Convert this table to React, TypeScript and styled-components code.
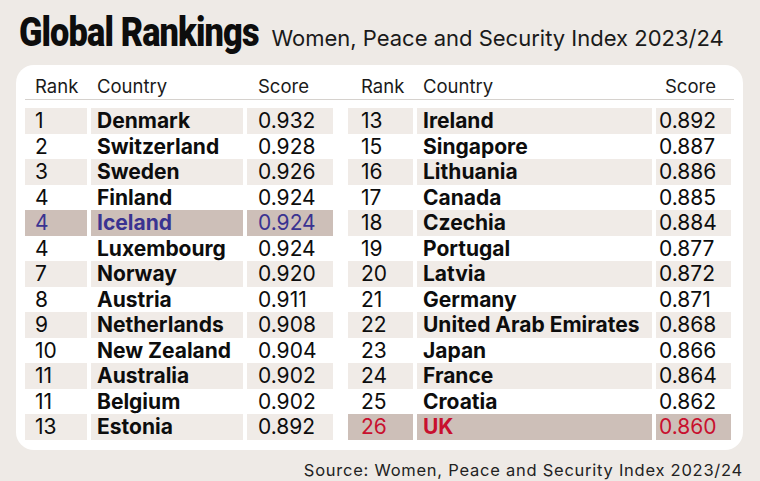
import React from "react";
import styled, { createGlobalStyle } from "styled-components";

type Entry = { rank: number; country: string; score: string };

const left: Entry[] = [
  { rank: 1, country: "Denmark", score: "0.932" },
  { rank: 2, country: "Switzerland", score: "0.928" },
  { rank: 3, country: "Sweden", score: "0.926" },
  { rank: 4, country: "Finland", score: "0.924" },
  { rank: 4, country: "Iceland", score: "0.924" },
  { rank: 4, country: "Luxembourg", score: "0.924" },
  { rank: 7, country: "Norway", score: "0.920" },
  { rank: 8, country: "Austria", score: "0.911" },
  { rank: 9, country: "Netherlands", score: "0.908" },
  { rank: 10, country: "New Zealand", score: "0.904" },
  { rank: 11, country: "Australia", score: "0.902" },
  { rank: 11, country: "Belgium", score: "0.902" },
  { rank: 13, country: "Estonia", score: "0.892" },
];

const right: Entry[] = [
  { rank: 13, country: "Ireland", score: "0.892" },
  { rank: 15, country: "Singapore", score: "0.887" },
  { rank: 16, country: "Lithuania", score: "0.886" },
  { rank: 17, country: "Canada", score: "0.885" },
  { rank: 18, country: "Czechia", score: "0.884" },
  { rank: 19, country: "Portugal", score: "0.877" },
  { rank: 20, country: "Latvia", score: "0.872" },
  { rank: 21, country: "Germany", score: "0.871" },
  { rank: 22, country: "United Arab Emirates", score: "0.868" },
  { rank: 23, country: "Japan", score: "0.866" },
  { rank: 24, country: "France", score: "0.864" },
  { rank: 25, country: "Croatia", score: "0.862" },
  { rank: 26, country: "UK", score: "0.860" },
];

type Tone = "plain" | "stripe" | "iceland" | "uk";

const GlobalStyle = createGlobalStyle`
  html, body {
    margin: 0;
    padding: 0;
    background: #eeeae6;
  }
  body {
    font-family: "Inter", "Liberation Sans", sans-serif;
    color: #111;
  }
`;

const Page = styled.div`
  width: 760px;
  height: 481px;
  box-sizing: border-box;
  padding: 10px 17px 0 16px;
  background: #eeeae6;
  overflow: hidden;
`;

const TitleRow = styled.div`
  display: flex;
  align-items: baseline;
  height: 55px;
  padding-left: 3px;
`;

const Title = styled.h1`
  margin: 0 -40px 0 0;
  font-family: "Roboto", "Liberation Sans", sans-serif;
  font-weight: 900;
  font-size: 40px;
  line-height: 45px;
  letter-spacing: -1px;
  color: #0d0d0d;
  display: inline-block;
  transform: scaleX(0.858);
  transform-origin: left center;
`;

const Subtitle = styled.span`
  font-family: "Inter", "Liberation Sans", sans-serif;
  font-size: 22px;
  color: #1a1a1a;
  margin-left: 13px;
`;

const Card = styled.div`
  width: 727px;
  height: 385px;
  box-sizing: border-box;
  background: #fff;
  border-radius: 18px;
  padding: 8px 12px 0 9px;
`;

const Grid = styled.div`
  display: grid;
  grid-template-columns: 62px 152px 86px 7px 65px 235px 75px;
  grid-template-rows: 35px;
  grid-auto-rows: 25.5px;
  column-gap: 4px;
`;

const Head = styled.div<{ $pad: number; $end?: boolean }>`
  font-size: 18.5px;
  line-height: 26px;
  height: 26px;
  padding-left: ${(p) => p.$pad}px;
  color: #1a1a1a;
  border-bottom: 1px solid #d6d2ce;
  margin-right: ${(p) => (p.$end ? -3 : -4)}px;
`;

const Cell = styled.div<{ $tone: Tone; $bold?: boolean; $pad: number }>`
  font-size: 21px;
  line-height: 25.5px;
  white-space: nowrap;
  padding-left: ${(p) => p.$pad}px;
  font-weight: ${(p) => (p.$bold ? 700 : 400)};
  background: ${(p) =>
    p.$tone === "stripe" ? "#f0ebe7" : p.$tone === "iceland" || p.$tone === "uk" ? "#cdbfb8" : "transparent"};
  color: ${(p) => (p.$tone === "iceland" ? "#3a3391" : p.$tone === "uk" ? "#c8102e" : "#0d0d0d")};
`;

const Spacer = styled.div``;

const Source = styled.div`
  text-align: right;
  font-size: 16.5px;
  letter-spacing: 0.75px;
  color: #222;
  margin-top: 10px;
`;

const toneFor = (i: number, e: Entry): Tone => {
  if (e.country === "Iceland") return "iceland";
  if (e.country === "UK") return "uk";
  return i % 2 === 0 ? "stripe" : "plain";
};

const Side = ({ e, i, wide }: { e: Entry; i: number; wide?: boolean }) => {
  const tone = toneFor(i, e);
  return (
    <>
      <Cell $tone={tone} $pad={wide ? 13 : 10}>{e.rank}</Cell>
      <Cell $tone={tone} $pad={6} $bold>{e.country}</Cell>
      <Cell $tone={tone} $pad={wide ? 3 : 11}>{e.score}</Cell>
    </>
  );
};

export default function App() {
  return (
    <Page>
      <GlobalStyle />
      <TitleRow>
        <Title>Global Rankings</Title>
        <Subtitle>Women, Peace and Security Index 2023/24</Subtitle>
      </TitleRow>
      <Card>
        <Grid>
          <Head $pad={10}>Rank</Head>
          <Head $pad={6}>Country</Head>
          <Head $pad={11}>Score</Head>
          <Head $pad={0} />
          <Head $pad={13}>Rank</Head>
          <Head $pad={6}>Country</Head>
          <Head $pad={9} $end>Score</Head>
          {left.map((e, i) => (
            <React.Fragment key={i}>
              <Side e={e} i={i} />
              <Spacer />
              <Side e={right[i]} i={i} wide />
            </React.Fragment>
          ))}
        </Grid>
      </Card>
      <Source>Source: Women, Peace and Security Index 2023/24</Source>
    </Page>
  );
}
